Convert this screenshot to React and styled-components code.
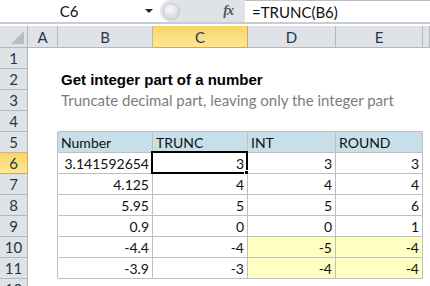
import React from "react";
import styled, { createGlobalStyle, css } from "styled-components";

const GlobalStyle = createGlobalStyle`
  body {
    margin: 0;
    background: #fff;
    font-family: "Lato", "Liberation Sans", sans-serif;
  }
`;

const Page = styled.div`
  width: 430px;
  height: 286px;
  overflow: hidden;
  background: #fff;
`;

const FormulaBar = styled.div`
  display: flex;
  height: 22px;
  border-bottom: 2px solid #c9cdd2;
  margin-bottom: 2px;
`;

const NameBox = styled.div`
  position: relative;
  width: 160px;
  display: flex;
  align-items: center;
  justify-content: center;
  font-size: 15px;
  color: #111;
  padding-right: 22px;
  box-sizing: border-box;
`;

const Caret = styled.span`
  position: absolute;
  right: 7px;
  top: 9px;
  width: 0;
  height: 0;
  border-left: 4px solid transparent;
  border-right: 4px solid transparent;
  border-top: 4px solid #222;
`;

const Splitter = styled.div`
  width: 85px;
  display: flex;
  align-items: center;
  justify-content: space-between;
  background: #dfe2e6;
  border-radius: 11px 0 0 11px;
  padding: 0 12px 0 3px;
  box-sizing: border-box;
`;

const Knob = styled.span`
  width: 15px;
  height: 15px;
  border-radius: 50%;
  background: radial-gradient(circle at 40% 35%, #fbfbfb, #d4d7db 75%);
  border: 1px solid #c4c8cd;
`;

const Fx = styled.span`
  font-family: "Liberation Serif", serif;
  font-style: italic;
  font-weight: bold;
  font-size: 14px;
  color: #555;
  letter-spacing: -1px;
`;

const Formula = styled.div`
  flex: 1;
  display: flex;
  align-items: center;
  padding-left: 7px;
  font-size: 15px;
  color: #111;
  border-top: 1px solid #b9bdc2;
`;

const Sheet = styled.div`
  display: grid;
  grid-template-columns: 28px 30px 95px 95px 88px 87px 1fr;
  grid-template-rows: 22px repeat(12, 21px);
`;

const headBase = css`
  background: #dfe3e8;
  color: #25364b;
  font-size: 15px;
  display: flex;
  align-items: center;
  justify-content: center;
  box-sizing: border-box;
  border-right: 1px solid #b4b8bd;
  border-bottom: 1px solid #b4b8bd;
`;

const activeHead = css`
  background: linear-gradient(#f8d565, #fde898);
  border-bottom-color: #e0a441;
  border-right-color: #e0a441;
`;

const Corner = styled.div`
  ${headBase};
  position: relative;
  &::after {
    content: "";
    position: absolute;
    right: 3px;
    bottom: 3px;
    border-left: 13px solid transparent;
    border-bottom: 13px solid #b9bdc2;
  }
`;

const ColHead = styled.div`
  ${headBase};
  ${(p) => p.$active && activeHead};
`;

const RowHead = styled.div`
  ${headBase};
  ${(p) => p.$active && activeHead};
`;

const fills = {
  plain: "#fff",
  head: "#c6dfe9",
  hi: "#ffffc2",
};

const Cell = styled.div`
  position: relative;
  z-index: ${(p) => (p.$spill ? 1 : 0)};
  box-sizing: border-box;
  background: ${(p) => fills[p.$fill] || "transparent"};
  border-right: 1px solid ${(p) => (p.$br ? "#bfbfbf" : "transparent")};
  border-bottom: 1px solid ${(p) => (p.$bb ? "#bfbfbf" : "transparent")};
  display: flex;
  align-items: center;
  justify-content: ${(p) => (p.$right ? "flex-end" : "flex-start")};
  padding: 0 3px;
  font-size: ${(p) => (p.$spill ? "15px" : "14px")};
  color: ${(p) => (p.$muted ? "#7c7c7c" : "#111")};
  white-space: nowrap;
  overflow: visible;
  ${(p) =>
    p.$bold &&
    css`
      font-family: "Liberation Sans", sans-serif;
      font-weight: 700;
      color: #000;
    `}
  ${(p) =>
    p.$selected &&
    css`
      &::after {
        content: "";
        position: absolute;
        left: -2px;
        top: -2px;
        right: -1px;
        bottom: -1px;
        border: 2px solid #000;
      }
      &::before {
        content: "";
        position: absolute;
        right: -4px;
        bottom: -4px;
        width: 5px;
        height: 5px;
        background: #000;
        border: 1px solid #fff;
        z-index: 2;
      }
    `}
`;

const cols = ["A", "B", "C", "D", "E"];

const table = [
  ["Number", "TRUNC", "INT", "ROUND"],
  ["3.141592654", 3, 3, 3],
  ["4.125", 4, 4, 4],
  ["5.95", 5, 5, 6],
  ["0.9", 0, 0, 1],
  ["-4.4", -4, -5, -4],
  ["-3.9", -3, -4, -4],
];

// table occupies B5:E11 -> col index 1..4, row 5..11
const inTable = (c, r) => c >= 1 && c <= 4 && r >= 5 && r <= 11;

const cellInfo = (c, r) => {
  if (r === 2 && c === 1)
    return { text: "Get integer part of a number", bold: true, spill: true };
  if (r === 3 && c === 1)
    return {
      text: "Truncate decimal part, leaving only the integer part",
      muted: true,
      spill: true,
    };
  if (!inTable(c, r)) return {};
  const v = table[r - 5][c - 1];
  if (r === 5) return { text: v, fill: "head" };
  return {
    text: v,
    right: true,
    fill: (r === 10 || r === 11) && c >= 3 ? "hi" : "plain",
  };
};

const App = () => {
  const rows = Array.from({ length: 12 }, (_, i) => i + 1);
  return (
    <Page>
      <GlobalStyle />
      <FormulaBar>
        <NameBox>
          C6
          <Caret />
        </NameBox>
        <Splitter>
          <Knob />
          <Fx>fx</Fx>
        </Splitter>
        <Formula>=TRUNC(B6)</Formula>
      </FormulaBar>
      <Sheet>
        <Corner />
        {cols.map((c) => (
          <ColHead key={c} $active={c === "C"}>
            {c}
          </ColHead>
        ))}
        <ColHead />
        {rows.map((r) => (
          <React.Fragment key={r}>
            <RowHead $active={r === 6}>{r}</RowHead>
            {[0, 1, 2, 3, 4, 5].map((c) => {
              const info = cellInfo(c, r);
              return (
                <Cell
                  key={c}
                  $fill={info.fill}
                  $bold={info.bold}
                  $muted={info.muted}
                  $right={info.right}
                  $spill={info.spill}
                  $br={inTable(c, r) || inTable(c + 1, r)}
                  $bb={inTable(c, r) || inTable(c, r + 1)}
                  $selected={c === 2 && r === 6}
                >
                  {info.text}
                </Cell>
              );
            })}
          </React.Fragment>
        ))}
      </Sheet>
    </Page>
  );
};

export default App;
